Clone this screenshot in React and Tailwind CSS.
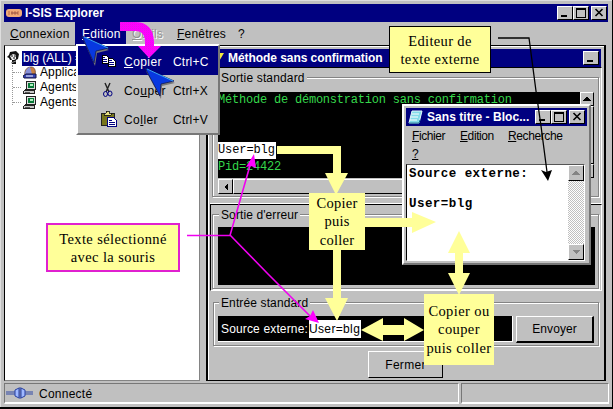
import React from "react";

const sans = "font-['Liberation_Sans',Arial,sans-serif]";
const serif = "font-['Liberation_Serif',serif]";
const mono = "font-['Liberation_Mono',monospace]";
const raised = "border border-t-white border-l-white border-r-black border-b-black bg-[#c0c0c0]";

function WinButton({ kind, className = "" }) {
  return (
    <div className={`h-[14px] w-[16px] shrink-0 ${raised} ${className}`}>
      <svg width="14" height="12" viewBox="0 0 14 12" shapeRendering="crispEdges" fill="none" stroke="#000">
        {kind === "min" && <path d="M3 9h6" strokeWidth="2" />}
        {kind === "max" && <path d="M2.5 1v9h9v-9M2 1.5h10M2 2.5h10" />}
        {kind === "close" && <path d="M3.5 2l7 7M10.5 2l-7 7" strokeWidth="1.6" shapeRendering="auto" />}
      </svg>
    </div>
  );
}

function Group({ label, className = "", labelClass = "", children }) {
  return (
    <div className={`relative border border-[#848484] shadow-[inset_1px_1px_0_#fff,1px_1px_0_#fff] ${className}`}>
      <span className={`absolute -top-[7px] left-[6px] whitespace-nowrap bg-[#c0c0c0] px-[2px] text-[12px] leading-[15px] ${labelClass}`}>{label}</span>
      {children}
    </div>
  );
}

function Arrow({ dir, dim }) {
  const d = { up: "M5 1l4 5H1z", down: "M1 2h8L5 6z", left: "M7 0v8L3 4z" }[dir];
  return (
    <svg width="10" height="8" viewBox="0 0 10 8" fill={dim ? "#848484" : "#000"} shapeRendering="crispEdges">
      <path d={d} />
    </svg>
  );
}

function Monitor() {
  return (
    <svg width="14" height="14" viewBox="0 0 14 14" shapeRendering="crispEdges" className="shrink-0">
      <path d="M3 0h10v9h-1v4H0v-3l3-2z" fill="#222" />
      <path d="M4 1h8v7H4z" fill="#dedede" />
      <path d="M5 2h6v5H5z" fill="#087838" />
      <path d="M7 3h3v2H7z" fill="#b0f0c0" />
      <path d="M1 10h10v2H1z" fill="#c8c8c8" />
      <path d="M2 11h5v1H2z" fill="#555" />
    </svg>
  );
}

function AppIcon() {
  return (
    <svg width="14" height="14" viewBox="0 0 14 14" className="shrink-0">
      <path d="M2 10C1 4 4 1 8 1c4 0 5 4 4 8z" fill="#c98245" stroke="#5b382b" strokeWidth=".7" />
      <path d="M2 8c0-3 2-6 5-7l2 7z" fill="#8890d8" />
      <path d="M0 10l3-2h10v4H1z" fill="#3443b8" stroke="#151542" />
      <path d="M3 10h7" stroke="#fff" />
    </svg>
  );
}

function Tree() {
  const rows = [["Applica", <AppIcon />], ["Agents", <Monitor />], ["Agents", <Monitor />]];
  return (
    <div className="h-[336px] w-[196px] overflow-hidden border border-l-black border-t-[#666] border-r-[#848484] border-b-[#848484] bg-white pt-[5px] text-[12px]">
      <div className="flex h-[14px] items-center pl-[2px]">
        <svg width="13" height="14" viewBox="0 0 13 14">
          <path d="M3 1l6-1 3 3-1 5-2 1v4H5V9H3l-1-2-2-1 2-2z" fill="#111" />
          <path d="M3 5l3-2 3 1v4L7 9H5z" fill="#eee" />
          <path d="M4 5h2m1 0h2M6 7h2" stroke="#111" />
          <path d="M4 12l5-2" stroke="#888" />
        </svg>
        <span className="ml-[2px] h-[15px] w-[120px] whitespace-nowrap bg-[#000080] pl-px leading-[15px] text-white">blg (ALL) =</span>
      </div>
      <div className="ml-[7px] h-[40px] border-l border-dotted border-[#999]">
        {rows.map(([name, icon], i) => (
          <div key={i} className="flex h-[15px] items-center">
            <span className="mr-[2px] w-[8px] border-t border-dotted border-[#999]" />
            {icon}
            <span className="ml-[3px] leading-[15px] tracking-[0.1px]">{name}</span>
          </div>
        ))}
      </div>
    </div>
  );
}

function InnerFrame() {
  return (
    <div className="flex h-[336px] w-[400px] flex-col border-2 border-black border-t border-b-[1px] bg-[#c0c0c0] shadow-[inset_1px_1px_0_#fff]">
      <div className="mx-[3px] mt-[3px] flex h-[18px] shrink-0 items-center bg-[#000080] pr-[2px]">
        <svg width="10" height="12" viewBox="0 0 10 12" className="ml-[4px]"><path d="M0 1h9L3 11z" fill="#efe940" /></svg>
        <span className="ml-[3px] flex-1 whitespace-nowrap text-[12px] font-bold leading-[18px] tracking-[-0.06px] text-white">Méthode sans confirmation</span>
        <WinButton kind="min" />
      </div>
      <div className="mx-[2px] flex h-[137px] shrink-0 flex-col border-y border-r border-t-black border-b-white border-r-white pl-[2px] pr-[2px] pt-[9px]">
        <Group label="Sortie standard" className="h-[120px] pl-[5px] pr-[4px] pt-[14px]" labelClass="tracking-[0.15px]">
          <div className="flex h-[86px]">
            <div className={`flex-1 overflow-hidden bg-black text-[12px] leading-[17px] text-[#35d84b] ${mono}`}>
              <pre className={`h-[50px] tracking-[-0.21px] ${mono}`}>Méthode de démonstration sans confirmation</pre>
              <div className="flex h-[17px]"><span className="w-[58px] whitespace-nowrap bg-white tracking-[-0.1px] text-black">User=blg</span></div>
              <div className="tracking-[-0.21px]">Pid=24422</div>
            </div>
            <div className="flex w-[14px] flex-col bg-[#c0c0c0]">
              <div className={`flex h-[14px] items-center justify-center ${raised}`}><Arrow dir="up" /></div>
              <div className={`flex-1 ${raised}`} />
              <div className={`flex h-[14px] items-center justify-center ${raised}`}><Arrow dir="down" /></div>
            </div>
          </div>
          <div className="mt-px flex h-[15px] w-[362px]">
            <div className={`flex w-[15px] items-center justify-center ${raised}`}><Arrow dir="left" /></div>
            <div className={`flex-1 ${raised}`} />
          </div>
        </Group>
      </div>
      <div className="mx-[2px] flex h-[87px] shrink-0 flex-col border border-t-black border-l-black border-r-white border-b-white pl-px pr-[2px] pt-[9px]">
        <Group label="Sortie d'erreur" className="h-[75px] pl-[5px] pr-[3px] pt-[12px]" labelClass="tracking-[0.1px]">
          <div className="h-[58px] bg-black" />
        </Group>
      </div>
      <div className="ml-[5px] mr-[5px] mt-[11px] shrink-0">
        <Group label="Entrée standard" className="h-[44px] pl-[4px] pr-[4px] pt-[13px]" labelClass="-ml-[1px] tracking-[0.12px]">
          <div className="flex h-[27px] items-start">
            <div className="flex h-[26px] w-[296px] items-center border-b border-r border-white bg-black pl-[3px] text-[12px]">
              <span className="w-[88px] whitespace-nowrap tracking-[0.15px] text-white">Source externe:</span>
              <span className="h-[18px] w-[52px] whitespace-nowrap bg-white leading-[18px] tracking-[0.35px]">User=blg</span>
            </div>
            <button className={`ml-[3px] h-[27px] w-[78px] border-r-2 border-b-2 text-[12px] tracking-[0.1px] ${raised}`}>Envoyer</button>
          </div>
        </Group>
      </div>
      <button className={`ml-[160px] mt-[5px] h-[27px] w-[75px] shrink-0 text-[12px] tracking-[0.3px] ${raised}`}>Fermer</button>
    </div>
  );
}

function EditMenu() {
  const copy = (
    <svg width="15" height="13" viewBox="0 0 15 13" shapeRendering="crispEdges">
      <path d="M1 1h4l2 2v6H1zM7 4h4l3 3v5H7z" fill="#fff" stroke="#000" />
      <path d="M2 3h2M2 5h4M2 7h4M8 6h3M8 8h5M8 10h5" stroke="#000080" />
    </svg>
  );
  const cut = (
    <svg width="12" height="16" viewBox="0 0 12 16" fill="none">
      <path d="M3 1l4 9M8 1L4 10" stroke="#222" strokeWidth="1.4" />
      <ellipse cx="3.5" cy="12" rx="2" ry="2.5" stroke="#000080" /><ellipse cx="8" cy="11.5" rx="2" ry="2.5" stroke="#000080" />
    </svg>
  );
  const paste = (
    <svg width="17" height="16" viewBox="0 0 17 16" shapeRendering="crispEdges">
      <path d="M1 2h13v12H1z" fill="#77751b" stroke="#222" />
      <path d="M4 3V2h2V0h3v2h2v2H4z" fill="#e8df80" stroke="#111" strokeWidth=".8" />
      <path d="M7 6h6l3 3v6H7z" fill="#fff" stroke="#000080" /><path d="M9 9h3M9 11h6M9 13h6" stroke="#000080" />
    </svg>
  );
  const rows = [
    { icon: copy, label: <><u>C</u>opier</>, key: "Ctrl+C" },
    { icon: cut, label: <>Co<u>u</u>per</>, key: "Ctrl+X" },
    { icon: paste, label: <>Co<u>l</u>ler</>, key: "Ctrl+V" },
  ];
  return (
    <div className="absolute left-[76px] top-[44px] h-[91px] w-[144px] border-2 border-t-white border-l-white border-r-[#777] border-b-[#777] bg-[#c0c0c0]">
      {rows.map((r, i) => (
        <div key={i} className={`flex h-[29px] items-center text-[12px] ${i === 0 ? "bg-[#000080] text-white" : "text-black"}`}>
          <span className="flex w-[46px] justify-center pl-[14px]">{r.icon}</span>
          <span className="w-[49px] whitespace-nowrap pt-[2px] tracking-[0.45px]">{r.label}</span>
          <span className="whitespace-nowrap pt-[2px] tracking-[0.2px]">{r.key}</span>
        </div>
      ))}
    </div>
  );
}

function Notepad() {
  return (
    <div className="absolute left-[402px] top-[104px] flex h-[161px] w-[189px] flex-col border-2 border-t-white border-l-white border-r-[#777] border-b-[#777] bg-[#c0c0c0] p-[2px]">
      <div className="flex h-[18px] shrink-0 items-center bg-[#000080] pr-[2px]">
        <svg width="15" height="15" viewBox="0 0 15 15" className="ml-[2px] shrink-0">
          <path d="M4 1h10l-3 12H1z" fill="#83dce9" stroke="#e8ffff" /><path d="M4 4h7M3 7h7M2 10h7" stroke="#fff" /><path d="M1 13h10l1-3" stroke="#087092" fill="none" />
        </svg>
        <span className="ml-[4px] flex-1 whitespace-nowrap text-[12px] font-bold tracking-[0.05px] text-white">Sans titre - Bloc...</span>
        <WinButton kind="min" /><WinButton kind="max" /><WinButton kind="close" className="ml-[2px]" />
      </div>
      <div className="flex h-[38px] shrink-0 flex-wrap content-start pl-[6px] pt-[1px] text-[12px] leading-[18px] tracking-[-0.4px]">
        <span className="w-[48px]"><u>F</u>ichier</span>
        <span className="w-[48px]"><u>E</u>dition</span>
        <span className="w-[56px]"><u>R</u>echerche</span>
        <u className="w-full">?</u>
      </div>
      <div className="mr-[2px] flex h-[97px] border border-t-[#555] border-l-black border-r-white border-b-white bg-white">
        <pre className={`flex-1 pl-[2px] pt-[2px] text-[12.5px] font-bold leading-[15px] tracking-[0.45px] ${mono}`}>{"Source externe:\n\nUser=blg"}</pre>
        <div className="flex w-[16px] flex-col justify-between bg-[repeating-conic-gradient(#c0c0c0_0_25%,#fff_0_50%)] bg-[length:2px_2px]">
          <div className={`flex h-[16px] items-center justify-center ${raised}`}><Arrow dir="up" dim /></div>
          <div className={`flex h-[16px] items-center justify-center ${raised}`}><Arrow dir="down" dim /></div>
        </div>
      </div>
    </div>
  );
}

function Annotations() {
  return (
    <>
      <svg className="pointer-events-none absolute left-0 top-0" width="613" height="409" viewBox="0 0 613 409">
        <defs>
          <pattern id="dots" width="2" height="2" patternUnits="userSpaceOnUse"><rect width="2" height="2" fill="#ff00ff" /><rect width="1" height="1" fill="#e815e8" /></pattern>
        </defs>
        <g fill="#ffff99">
          <path d="M277 146h64v27h7l-12 22-11-22h8v-19h-56z" />
          <path d="M333 248h8v50h7l-11 23-12-23h8z" />
          <path d="M364 218h48v-6l24 10-24 11v-6h-48z" />
          <path d="M459 231l11 22h-7v20h7l-11 22-11-22h7v-20h-7z" />
          <path d="M361 330l22-12v7h21v-7l20 12-20 11v-6h-21v6z" />
        </g>
        <g fill="none" stroke="#f000f0" strokeWidth="1.6">
          <path d="M187 235.500h43L251 162M230 235l38 39 43 43" />
        </g>
        <path d="M254 154l2 14-5-2-5 1zM319 323l-14-4 5-3 3-6z" fill="#ff00ff" />
        <path d="M120 22h15c12 0 19 7 19 20v4h7l-12 12-11-12h7v-4c0-8-4-11-10-11h-15z" fill="url(#dots)" />
        <g strokeLinejoin="round">
          <g fill="#777" transform="translate(1 2)">
            <path d="M82 37l26 11-12 3-2 13z" /><path d="M145 69l29 12-13 3-1 13z" />
          </g>
          <g fill="#0838e0" stroke="#101858" strokeWidth=".8">
            <path d="M82 36l27 12-13 3-2 12z" /><path d="M145 68l29 13-13 3-1 12z" />
          </g>
          <path d="M84 37l24 11M147 69l26 12" stroke="#35a5ff" />
        </g>
        <path d="M498 38h31l7 53 5 35 6 46" fill="none" stroke="#000" strokeWidth="1.3" />
        <path d="M548 181l-7-11 5 2 6-2z" />
      </svg>
      <div className={`absolute left-[389px] top-[26px] flex h-[47px] w-[102px] items-center justify-center border border-black bg-[#ffff99] text-center text-[14.5px] leading-[18px] tracking-[0.35px] ${serif}`}>Editeur de<br />texte externe</div>
      <div className={`absolute left-[46px] top-[223px] flex h-[49px] w-[134px] items-center justify-center border-2 border-[#e020d0] bg-[#ffff99] text-center text-[14.5px] leading-[18px] tracking-[0.4px] ${serif}`}>Texte sélectionné<br />avec la souris</div>
      <div className={`absolute left-[309px] top-[193px] flex h-[57px] w-[56px] items-center justify-center bg-[#ffff99] text-center text-[14.5px] leading-[18.5px] tracking-[0.25px] ${serif}`}>Copier<br />puis<br />coller</div>
      <div className={`absolute left-[424px] top-[294px] flex h-[71px] w-[70px] items-center justify-center bg-[#ffff99] text-center text-[14.5px] leading-[18.5px] tracking-[0.4px] ${serif}`}>Copier ou<br />couper<br />puis coller</div>
    </>
  );
}

export default function App() {
  return (
    <div className={`relative h-[409px] w-[613px] overflow-hidden border-b-2 border-r border-black bg-[#c0c0c0] text-black ${sans}`}>
      <div className="flex h-[408px] flex-col border-t border-l border-[#dedede] pl-[3px] pt-[3px]">
        <div className="flex h-[18px] w-[604px] shrink-0 items-center bg-[#000080] pr-px">
          <svg width="16" height="10" viewBox="0 0 16 10" className="ml-[2px]">
            <rect x="0" y="1" width="16" height="8" rx="3" fill="#efab79" /><path d="M3 3v4M6 3v4M9 3v4M12 3v4" stroke="#bd6848" /><path d="M5 5h7" stroke="#8e4b3c" />
          </svg>
          <span className="ml-[3px] flex-1 text-[12px] font-bold leading-[18px] tracking-[0.02px] text-white">I-SIS Explorer</span>
          <WinButton kind="min" /><WinButton kind="max" /><WinButton kind="close" className="ml-[2px]" />
        </div>
        <div className="flex h-[23px] shrink-0 text-[12px] leading-[24px]">
          <span className="w-[71px] pl-[6px] tracking-[0.25px]"><u>C</u>onnexion</span>
          <span className="w-[51px] bg-[#000080] pl-[7px] tracking-[0.3px] text-white"><u>E</u>dition</span>
          <span className="w-[51px] pl-[6px] text-[#929292] [text-shadow:1px_1px_0_#fff]"><u>O</u>utils</span>
          <span className="w-[61px] tracking-[0.2px]"><u>F</u>enêtres</span>
          <span>?</span>
        </div>
        <div className="flex h-[337px] shrink-0 gap-[6px]"><Tree /><InnerFrame /></div>
        <div className="mt-[1px] flex h-[21px] w-[605px] shrink-0 gap-[2px] text-[12px]">
          <div className="flex w-[455px] items-center border border-b-2 border-t-[#777] border-l-[#777] border-r-white border-b-white pl-[1px]">
            <svg width="27" height="12" viewBox="0 0 27 12"><path d="M0 5h10M18 5h9M0 7h10M18 7h9" stroke="#3049a5" /><path d="M9 3l4-2v10l-4-2zM15 1l4 2v6l-4 2z" fill="#9fb8ff" stroke="#2840a0" /><path d="M14 0v12" stroke="#2840a0" /></svg>
            <span className="ml-[6px] pt-[2px] tracking-[0.25px]">Connecté</span>
          </div>
          <div className="flex-1 border border-b-2 border-t-[#777] border-l-[#777] border-r-white border-b-white" />
        </div>
      </div>
      <EditMenu />
      <Notepad />
      <Annotations />
    </div>
  );
}
